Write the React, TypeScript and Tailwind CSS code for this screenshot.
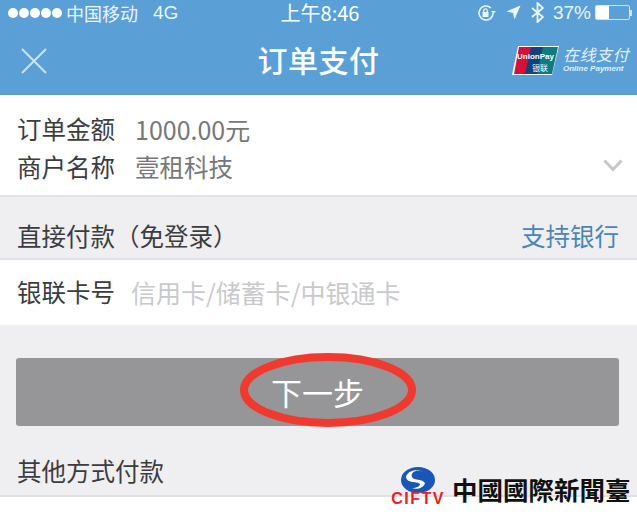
const font = { fontFamily: '"Noto Sans CJK SC", "Liberation Sans", sans-serif' };
const latin = { fontFamily: '"Liberation Sans", sans-serif' };

function StatusBar() {
  return (
    <div className="flex h-[25px] items-center justify-between pl-2 pr-[5px] text-[18px] leading-none text-[#eaf5fd]">
      <div className="flex flex-1 items-center">
        <div className="flex gap-px">
          {[0, 1, 2, 3, 4].map((i) => (
            <span key={i} className="h-[10px] w-[10px] rounded-full bg-white" />
          ))}
        </div>
        <span className="ml-[4px] text-[18px]">中国移动</span>
        <span className="ml-[15px] text-[19px]" style={latin}>4G</span>
      </div>
      <span className="text-[20px] text-white">上午8:46</span>
      <div className="flex flex-1 items-center justify-end">
        <svg width="20" height="18" viewBox="0 0 20 18" fill="none" stroke="#eaf5fd" strokeWidth="1.6">
          <path d="M17 9a7 7 0 1 1-2.2-5.1" />
          <path d="M17.5 9.5 15 7h5z" fill="#eaf5fd" stroke="none" />
          <rect x="6.5" y="8" width="6" height="5" fill="#eaf5fd" stroke="none" />
          <path d="M7.8 8V6.6a1.7 1.7 0 0 1 3.4 0V8" strokeWidth="1.2" />
        </svg>
        <svg className="ml-[10px]" width="15" height="15" viewBox="0 0 15 15" fill="#eaf5fd">
          <path d="M14.5 0.5 8.5 14.5 7 8 0.5 6.5z" />
        </svg>
        <svg className="ml-[10px]" width="13" height="21" viewBox="0 0 13 21" fill="none" stroke="#eaf5fd" strokeWidth="1.8">
          <path d="M1 6l11 9-5.5 5V1L12 6 1 15" />
        </svg>
        <span className="ml-[9px] text-[19px]" style={latin}>37%</span>
        <div className="ml-[4px] flex h-[15px] w-[35px] rounded-[2px] border border-[#cfe4f4]">
          <div className="w-[13px] bg-white" />
        </div>
        <div className="h-[6px] w-[2px] bg-[#cfe4f4]" />
      </div>
    </div>
  );
}

function UnionPayLogo() {
  return (
    <svg width="49" height="31" viewBox="0 0 49 31">
      <path d="M7 1h41l-7 29H1z" fill="#fff" />
      <path d="M8 2h14l-6 27H3z" fill="#d5103a" />
      <path d="M20 2h14l-6 27H14z" fill="#12427d" />
      <path d="M32 2h15l-6 27H26z" fill="#0d7c80" />
      <text x="6" y="14" fontSize="8" fontWeight="700" fill="#fff" fontFamily="Liberation Sans">UnionPay</text>
      <text x="21" y="26" fontSize="8" fill="#fff">银联</text>
    </svg>
  );
}

function NavBar() {
  return (
    <div className="relative flex h-[70px] items-center justify-center">
      <svg className="absolute left-[21px] top-[23px]" width="26" height="26" viewBox="0 0 26 26" stroke="#cfe0ee" strokeWidth="2">
        <path d="M1 1l24 24M25 1 1 25" />
      </svg>
      <span className="pb-[2px] text-[30px] font-medium leading-none tracking-[0.5px] text-white">订单支付</span>
      <div className="absolute left-[511px] top-[20px] flex items-center gap-[3px]">
        <UnionPayLogo />
        <div className="flex flex-col gap-[2px] pb-[2px] text-[#e3eff8]">
          <span className="text-[16px] italic leading-[16px] tracking-[0.5px]">在线支付</span>
          <span className="whitespace-nowrap text-[8px] font-bold italic leading-[9px]" style={latin}>Online Payment</span>
        </div>
      </div>
    </div>
  );
}

export default function App() {
  return (
    <div className="relative h-[514px] w-[637px] overflow-hidden bg-[#efeef0]" style={font}>
      <div className="h-[95px] bg-[#5a9fd6]">
        <StatusBar />
        <NavBar />
      </div>

      {/* order info */}
      <div className="relative flex h-[102px] flex-col gap-[2px] border-b-2 border-[#e2e1e3] bg-white pl-[17px] pt-[16px] text-[24.5px] leading-[36px] text-[#3c3c3e]">
        <div className="flex">
          <span className="w-[118px]">订单金额</span>
          <span className="text-[25px] text-[#77777a]">1000.00元</span>
        </div>
        <div className="flex">
          <span className="w-[118px]">商户名称</span>
          <span className="text-[#77777a]">壹租科技</span>
        </div>
        <svg className="absolute right-[14px] top-[64px]" width="20" height="13" viewBox="0 0 20 13" fill="none" stroke="#c8c8cc" strokeWidth="3">
          <path d="M1.5 1.5 10 10.5l8.5-9" />
        </svg>
      </div>

      {/* direct pay */}
      <div className="flex h-[63px] items-center justify-between border-b-2 border-[#e2e1e3] pl-[17px] pr-[18px] pt-[17px] text-[24.5px] leading-none text-[#3c3c3e]">
        <span>直接付款（免登录）</span>
        <span className="text-[#4a86b5]">支持银行</span>
      </div>

      <div className="flex h-[65px] items-center bg-white pb-[1px] pl-[17px] text-[24.5px] leading-none text-[#3c3c3e]">
        <span className="w-[114px]">银联卡号</span>
        <span className="text-[25px] text-[#c9c9cc]">信用卡/储蓄卡/中银通卡</span>
      </div>

      {/* next button */}
      <div className="px-[16px] pt-[33px]">
        <button className="flex h-[68px] w-[603px] items-center justify-center rounded-[3px] bg-[#969597] pb-[2px] text-[31px] leading-none text-white">
          下一步
        </button>
      </div>

      <div className="flex h-[69px] items-end pb-[12px] pl-[17px] text-[24.5px] leading-none text-[#3c3c3e]">
        其他方式付款
      </div>
      <div className="h-[19px] border-t-2 border-[#e2e1e3] bg-white" />

      {/* red marker circled over the button */}
      <svg className="absolute left-[240px] top-[352px]" width="176" height="76" viewBox="0 0 176 76" fill="none" stroke="#f03a30" strokeWidth="8">
        <ellipse cx="88" cy="38" rx="84" ry="33" />
      </svg>

      {/* watermark */}
      <div className="absolute left-[389px] top-[467px] flex items-end">
        <div className="flex w-[58px] flex-col items-center">
          <svg width="34" height="26" viewBox="0 0 34 26">
            <ellipse cx="17" cy="13" rx="17" ry="13" fill="#1a56b8" />
            <path d="M22 5c-6-3-13 0-11 5 2 4 9 1 13 6-1 5-9 7-13 5 5 0 8-2 8-4-2-3-13 0-14-7C6 4 16 1 22 5z" fill="#fff" />
          </svg>
          <span className="mt-[-1px] text-[16px] font-bold leading-[13px] tracking-[1.5px] text-[#e8202a]" style={latin}>CIFTV</span>
        </div>
        <span className="mb-[1px] ml-[5px] whitespace-nowrap text-[25.5px] font-bold leading-[30px] text-[#111]" style={{ fontFamily: '"Noto Sans CJK TC", sans-serif' }}>中國國際新聞臺</span>
      </div>
    </div>
  );
}
